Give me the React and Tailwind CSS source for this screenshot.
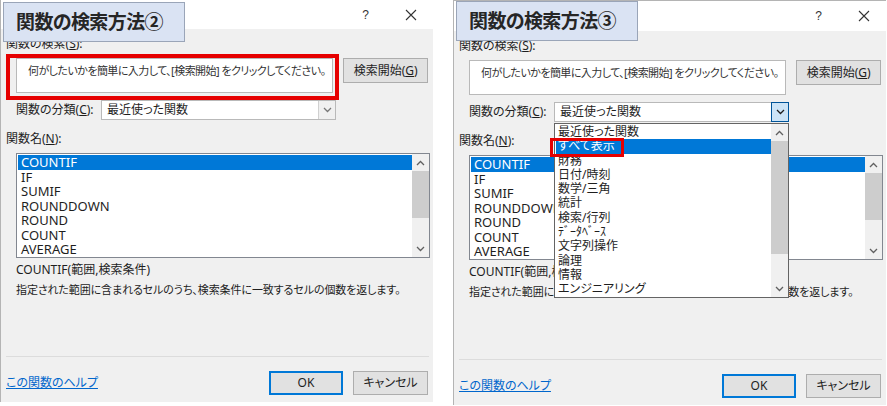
const FONT = "font-['Noto_Sans','Noto_Sans_CJK_JP',sans-serif] [font-feature-settings:'palt']";

const functions = ["COUNTIF", "IF", "SUMIF", "ROUNDDOWN", "ROUND", "COUNT", "AVERAGE"];
const categories = [
  "最近使った関数",
  "すべて表示",
  "財務",
  "日付/時刻",
  "数学/三角",
  "統計",
  "検索/行列",
  "ﾃﾞｰﾀﾍﾞｰｽ",
  "文字列操作",
  "論理",
  "情報",
  "エンジニアリング",
];

function Chevron({ up }) {
  return (
    <svg width="9" height="6" viewBox="0 0 9 6">
      <path
        d={up ? "M1 5 L4.5 1.5 L8 5" : "M1 1 L4.5 4.5 L8 1"}
        fill="none"
        stroke="currentColor"
        strokeWidth="1.3"
      />
    </svg>
  );
}

function ScrollBar({ thumb }) {
  return (
    <div className="w-[17px] h-full bg-[#f0f0f0] flex flex-col text-[#606060]">
      <div className="h-[17px] flex items-center justify-center">
        <Chevron up />
      </div>
      <div className="flex-1">
        <div className={"bg-[#cdcdcd] w-full " + thumb} />
      </div>
      <div className="h-[17px] flex items-center justify-center">
        <Chevron />
      </div>
    </div>
  );
}

function Button({ children, primary, className }) {
  return (
    <div
      className={
        "flex items-center justify-center bg-[#e1e1e1] text-[12px] text-[#1e1e1e] " +
        (primary ? "border-2 border-[#0078d7] " : "border border-[#adadad] ") +
        className
      }
    >
      {children}
    </div>
  );
}

function Dialog({ num, open }) {
  return (
    <div
      className={
        "relative w-[433px] flex flex-col border-l border-[#b4b4b4] " +
        (open ? "h-[405px] border-t" : "h-[402px]")
      }
    >
      {/* title bar */}
      <div className={"bg-white flex items-center justify-end pr-[16px] gap-[36px] text-[#333] " + (open ? "h-[30px]" : "h-[29px]")}>
        <span className="text-[12px] font-['Liberation_Sans',sans-serif]">?</span>
        <svg width="12" height="12" viewBox="0 0 12 12">
          <path d="M1 1 L11 11 M11 1 L1 11" stroke="#333" strokeWidth="1.1" />
        </svg>
      </div>

      {/* body */}
      <div className="flex-1 bg-[#f0f0f0] flex flex-col px-[5px] text-[12px] text-[#1e1e1e]">
        <div className="mt-[8px] leading-[14px]">
          関数の検索(<u>S</u>):
        </div>

        <div className="mt-[7px] flex items-start">
          <div className="ml-[10px] w-[318px] h-[35px] bg-white border border-[#b9b9b9] pl-[11px] pt-[5px] text-[#333] text-[11px] leading-[14px] tracking-[-0.55px] whitespace-nowrap overflow-hidden">
            何がしたいかを簡単に入力して、[検索開始] をクリックしてください。
          </div>
          <Button className="ml-[10px] w-[85px] h-[25px]">
            検索開始(<u>G</u>)
          </Button>
        </div>

        <div className="mt-[7px] flex items-center h-[20px]">
          <span className="ml-[10px] w-[85px]">
            関数の分類(<u>C</u>):
          </span>
          <div className="w-[235px] h-full bg-white border border-[#b9b9b9] flex items-center">
            <span className="flex-1 pl-[5px]">最近使った関数</span>
            {open ? (
              <div className="w-[18px] h-[calc(100%+2px)] -mr-px bg-[#cce4f7] border border-[#005499] flex items-center justify-center text-[#1e1e1e]">
                <Chevron />
              </div>
            ) : (
              <div className="w-[17px] h-full border-l border-[#d0d0d0] bg-[#f0f0f0] flex items-center justify-center text-[#777]">
                <Chevron />
              </div>
            )}
          </div>
        </div>

        <div className="mt-[12px] leading-[14px]">
          関数名(<u>N</u>):
        </div>

        <div className="mt-[7px] ml-[10px] w-[414px] h-[105px] bg-white border border-[#828790] flex">
          <div className="flex-1 pt-px pl-px overflow-hidden">
            {functions.map((f, i) => (
              <div
                key={f}
                className={
                  "h-[14.5px] leading-[14.5px] pl-[3px] text-[13px] " +
                  (i === 0 ? "bg-[#0078d7] text-white" : "text-[#1e1e1e]")
                }
              >
                {f}
              </div>
            ))}
          </div>
          <ScrollBar thumb="h-[47px]" />
        </div>

        <div className="mt-[5px] ml-[10px] leading-[14px]">COUNTIF(範囲,検索条件)</div>
        <div className="mt-[6px] ml-[10px] leading-[14px] text-[11px] tracking-[-0.1px] whitespace-nowrap">
          指定された範囲に含まれるセルのうち、検索条件に一致するセルの個数を返します。
        </div>

        <div className="flex-1" />
        <div className="h-px bg-[#dcdcdc] mr-[-1px]" />

        <div className="mt-[14px] mb-[7px] flex items-center">
          <span className="flex-1 text-[#0066cc] underline">この関数のヘルプ</span>
          <Button primary className="w-[74px] h-[24px]">
            OK
          </Button>
          <Button className="ml-[10px] w-[75px] h-[24px]">キャンセル</Button>
        </div>
      </div>

      {/* annotation label */}
      <div
        className={
          "absolute left-[2px] w-[182px] h-[40px] bg-[#dae3f3] border border-[#9aa5b8] flex items-center pl-[12px] text-[19px] tracking-[-0.6px] font-bold text-[#262626] " +
          (open ? "top-0" : "top-[2px]")
        }
      >
        関数の検索方法{num}
      </div>

      {open ? (
        <>
          {/* open category list */}
          <div className="absolute left-[100px] top-[122px] w-[235px] h-[175px] bg-white border border-[#646464] flex text-[12px] text-[#1e1e1e]">
            <div className="flex-1 pt-px pl-px overflow-hidden">
              {categories.map((c, i) => (
                <div
                  key={c}
                  className={
                    "h-[14.3px] leading-[14.3px] pl-[2px] " +
                    (i === 1 ? "bg-[#0078d7] text-white" : "")
                  }
                >
                  {c}
                </div>
              ))}
            </div>
            <ScrollBar thumb="h-[113px]" />
          </div>
          <div className="absolute left-[96px] top-[137px] w-[74px] h-[19px] border-[3px] border-[#e60000]" />
        </>
      ) : (
        <div className="absolute left-[5px] top-[54px] w-[333px] h-[46px] border-[4px] border-[#e60000]" />
      )}
    </div>
  );
}

export default function App() {
  return (
    <div className={"w-[887px] h-[406px] bg-white flex gap-[20px] overflow-hidden " + FONT}>
      <Dialog num="②" />
      <Dialog num="③" open />
    </div>
  );
}
